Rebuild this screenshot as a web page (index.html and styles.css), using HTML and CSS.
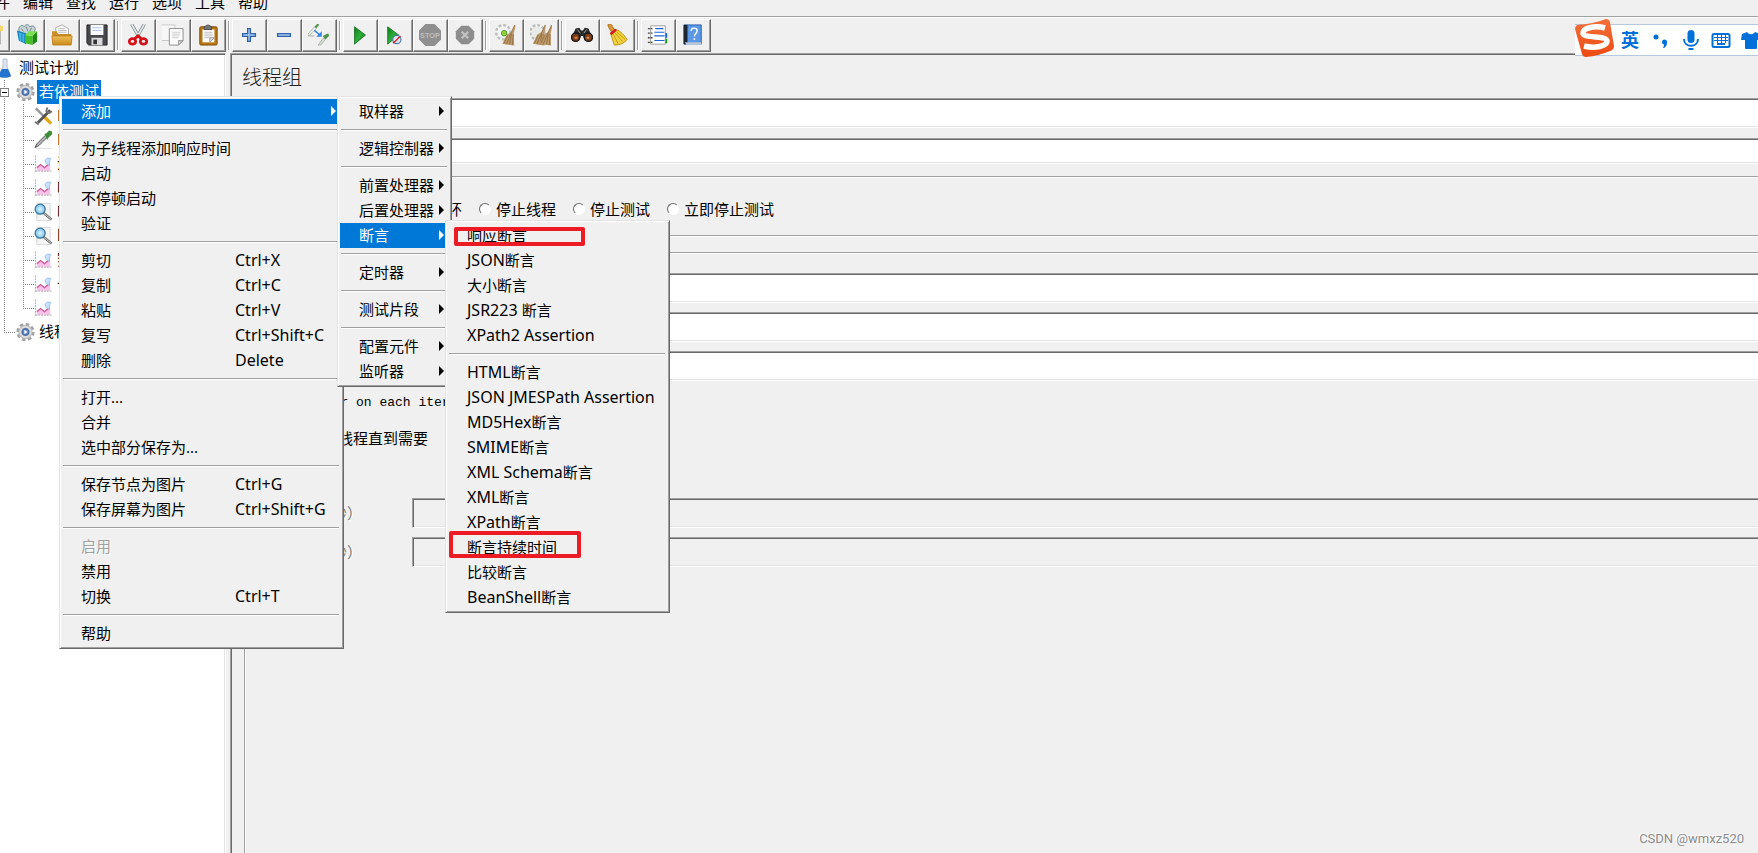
FILE: index.html
```html
<!DOCTYPE html>
<html lang="zh-CN">
<head>
<meta charset="utf-8">
<title>JMeter</title>
<link rel="stylesheet" href="styles.css">
</head>
<body>
<svg class="defs" aria-hidden="true">
  <defs>
    <linearGradient id="green" x1="0" y1="0" x2="1" y2="1"><stop offset="0" stop-color="#0a7a1c"/><stop offset=".5" stop-color="#2fae3a"/><stop offset="1" stop-color="#0b6b12"/></linearGradient>
    <linearGradient id="amber" x1="0" y1="0" x2="0" y2="1"><stop offset="0" stop-color="#f0bc58"/><stop offset="1" stop-color="#c98a18"/></linearGradient>
    <linearGradient id="orange" x1="0" y1="0" x2="0" y2="1"><stop offset="0" stop-color="#f4713a"/><stop offset="1" stop-color="#ee4a10"/></linearGradient>
    <radialGradient id="lens"><stop offset="0" stop-color="#d9f3fd"/><stop offset="1" stop-color="#7cc4ea"/></radialGradient>
    <radialGradient id="hub"><stop offset="0" stop-color="#b9d0f0"/><stop offset=".5" stop-color="#5f86bf"/><stop offset="1" stop-color="#2c4f8c"/></radialGradient>
    <symbol id="gear" viewBox="0 0 20 20">
      <circle cx="10" cy="10" r="8.200" fill="none" stroke="#a2a2a2" stroke-width="2.800" stroke-dasharray="3.700 2.740"/>
      <circle cx="10" cy="10" r="7" fill="#dadada" stroke="#a6a6a6" stroke-width=".8"/>
      <circle cx="10" cy="10" r="4.600" fill="url(#hub)" stroke="#f4f4f4" stroke-width=".6"/>
      <path d="M8.800 8l3.200 2-3.200 2z" fill="#fff"/>
    </symbol>
    <symbol id="chart" viewBox="0 0 20 20">
      <path d="M3 14l4-3 4 3 6-7v10H3z" fill="#f7bfea"/>
      <path d="M1.500 1v17M1.500 17.500H19" stroke="#a8a8a8" stroke-dasharray="2 1" fill="none"/>
      <path d="M3 14l4-3.500 4 3.500 3.500-3 1-3" fill="none" stroke="#d0508f" stroke-width="1.300"/>
      <path d="M17.500 4c-5-1-7 2-5 5 1 2 3 1 4 3-1-3 0-5 1-8z" fill="#c6e2ff" stroke="#8ab8ee" stroke-width=".8"/>
    </symbol>
    <symbol id="magnifier" viewBox="0 0 20 20">
      <path d="M3 1h14v18H3z" fill="#f5f5f5" stroke="#d8d8d8"/>
      <path d="M10 11l8.500 7" stroke="#666" stroke-width="2.400"/><path d="M10 11l8.500 7" stroke="#ccc" stroke-width="1"/>
      <circle cx="6.500" cy="7" r="5.300" fill="url(#lens)" stroke="#3c739c" stroke-width="1.300"/>
    </symbol>
    <symbol id="brush" viewBox="0 0 24 24">
      <path d="M21.500 1l1 .5-2 9 .5 13-7-1-6-1 5-10 5-3z" fill="#bd9868"/>
      <path d="M21.500 1l-4 9-5 12M18 11l-2 11M20 11l-1 12M14 12l-4 9" stroke="#8a673c" stroke-width=".8" fill="none"/>
    </symbol>
  </defs>
</svg>

<nav class="menubar" aria-label="主菜单">
  <button>文件</button><button>编辑</button><button>查找</button><button>运行</button><button>选项</button><button>工具</button><button>帮助</button>
</nav>

<div class="toolbar" role="toolbar" aria-label="工具栏">
  <div class="group">
    <button aria-label="新建"><svg viewBox="0 0 24 24"><path d="M3 2h18v20H3z" fill="#fff" stroke="#999"/><circle cx="22" cy="5" r="3" fill="#f5d76a"/></svg></button>
    <button aria-label="模板"><svg viewBox="0 0 24 24"><path d="M3 6c0-5 5-5 6-3 1-3 5-3 6 0 4-2 6 0 6 3l-2 5H4z" fill="#c5d3d5" stroke="#6d868d"/><path d="M6 5l2 3M11 3l2 5M17 4l-2 4" stroke="#6d868d"/><path d="M1 7l10 3v12l-8-4z" fill="#1583b8"/><path d="M3 9l3 1v9l-2-1zM7 10l2 1v9l-2-1z" fill="#45b5e2"/><path d="M10 12l8 1v10l-8-2z" fill="#42c024"/><path d="M18 13l5-5v11l-5 4z" fill="#1b8a14"/><path d="M10 12l4-4h9l-5 5z" fill="#7be04f"/></svg></button>
    <button aria-label="打开"><svg viewBox="0 0 24 24"><path d="M5 4l7-3 7 4v9H6z" fill="#fafafa" stroke="#aaa"/><path d="M8 5h7M8 7h9M8 9h9" stroke="#bbb"/><path d="M1 8h5l2 3h14v11H2z" fill="#c98d2a"/><path d="M1 13h22l-1 10H2z" fill="url(#amber)" stroke="#b77a12" stroke-width=".8"/></svg></button>
    <button aria-label="保存"><svg viewBox="0 0 24 24"><path d="M1 1h22v22H3l-2-2z" fill="#45474b" stroke="#222"/><path d="M5 1h14v11H5z" fill="#fafcff"/><path d="M7 4h10M7 7h10" stroke="#a7c3e2"/><path d="M6 15h12v8H6z" fill="#d9d9d9"/><path d="M8 17h4v5H8z" fill="#333"/></svg></button>
  </div>
  <div class="group">
    <button aria-label="剪切"><svg viewBox="0 0 24 24"><path d="M5 0l8 14M19 0l-8 14" stroke="#7b8588" stroke-width="3.400"/><path d="M5 0l8 14M19 0l-8 14" stroke="#e5eaea" stroke-width="1.800"/><g fill="none" stroke="#d3121b" stroke-width="3"><ellipse cx="6" cy="19" rx="3.500" ry="3"/><ellipse cx="18" cy="19" rx="3.500" ry="3"/><path d="M8.500 16l3.500-3 3.500 3"/></g></svg></button>
    <button aria-label="复制"><svg viewBox="0 0 24 24"><path d="M-1 1h15v17H-1z" fill="#f7f7f7" stroke="#c4c4c4"/><path d="M8 5h15v13l-5 5H8z" fill="#fcfcfc" stroke="#888"/><path d="M18 23v-5h5z" fill="#ccc" stroke="#999"/><path d="M11 9h9M11 11h9M11 13h8M11 15h7" stroke="#ccc"/></svg></button>
    <button aria-label="粘贴"><svg viewBox="0 0 24 24"><rect x="3" y="3" width="19" height="20" rx="1.500" fill="#b87512" stroke="#7d4d08"/><path d="M6 6h13v14H6z" fill="#fff"/><path d="M8 9h9M8 11h9M8 13h9M8 15h6" stroke="#bbb"/><path d="M14 20v-5h5z" fill="#ddd" stroke="#999"/><path d="M8 6V3l4-2 4 2v3z" fill="#777" stroke="#444"/></svg></button>
  </div>
  <div class="group">
    <button aria-label="展开"><svg viewBox="0 0 24 24"><path d="M10.500 5h3v5.500H19v3h-5.500V19h-3v-5.500H5v-3h5.500z" fill="#a9c9ef" stroke="#2e62ab" stroke-width="1.400"/></svg></button>
    <button aria-label="折叠"><svg viewBox="0 0 24 24"><path d="M5 10.500h14v3H5z" fill="#a9c9ef" stroke="#2e62ab" stroke-width="1.400"/></svg></button>
    <button aria-label="切换"><svg viewBox="0 0 24 24"><path d="M0 11l7-8 2 2-7 7-2 1z" fill="#e8efe6" stroke="#9bab98" stroke-width=".7"/><path d="M7 3l4-4 1 2-3 4z" fill="#4c944a"/><path d="M0 13h7" stroke="#aaa"/><path d="M7 7l6 5" stroke="#3284e8" stroke-width="1.700"/><path d="M15 8v6H9z" fill="#3284e8"/><path d="M11 23l6-8 2 2-5 6z" fill="#d7ddd5" stroke="#92a08f" stroke-width=".7"/><path d="M16 13l6-3 1 3-4 4z" fill="#4c944a"/></svg></button>
  </div>
  <div class="group">
    <button aria-label="启动"><svg viewBox="0 0 24 24"><path d="M6 3l12 9-12 10z" fill="url(#green)" stroke="#0b6a17" stroke-width=".8"/></svg></button>
    <button aria-label="不停顿启动"><svg viewBox="0 0 24 24"><path d="M4 3l12 9-12 10z" fill="url(#green)" stroke="#0b6a17" stroke-width=".8"/><circle cx="14" cy="17" r="4.500" fill="#dfe9f2" stroke="#4b7dae" stroke-width="1.300"/><path d="M10 21l8-8" stroke="#d9262c" stroke-width="1.600"/></svg></button>
    <button aria-label="停止" disabled><svg viewBox="0 0 24 24"><path d="M7 0h10l7 7v10l-7 7H7l-7-7V7z" fill="#8f8f8f"/><text x="12" y="15" class="stop-text">STOP</text></svg></button>
    <button aria-label="关闭" disabled><svg viewBox="0 0 24 24"><path d="M8 2h8l6 6v8l-6 6H8l-6-6V8z" fill="#8d8d8d"/><path d="M8.500 8.500l7 7M15.500 8.500l-7 7" stroke="#c2c2c2" stroke-width="2.500"/></svg></button>
  </div>
  <div class="group">
    <button aria-label="清除"><svg viewBox="0 0 24 24"><circle cx="9" cy="9" r="7.500" fill="#f9f9f9" stroke="#b9bdb9" stroke-width="3" stroke-dasharray="3 2"/><circle cx="9" cy="9" r="6.500" fill="#f2f4f2"/><circle cx="10" cy="10" r="3" fill="#8fcf2f" stroke="#4e9a35"/><use href="#brush"/></svg></button>
    <button aria-label="清除全部"><svg viewBox="0 0 24 24"><circle cx="8" cy="9" r="7.500" fill="#f9f9f9" stroke="#b9bdb9" stroke-width="3" stroke-dasharray="3 2"/><circle cx="8" cy="9" r="6.500" fill="#e8ebe8"/><use href="#brush" x="-5"/><use href="#brush" x="2"/></svg></button>
  </div>
  <div class="group">
    <button aria-label="查找"><svg viewBox="0 0 24 24"><path d="M5 5l4-1 2 3h2l2-3 4 1 4 9-3 4h-5l-2-5h-2l-2 5H4l-3-4z" fill="#292929"/><path d="M7 6l3 4M17 6l-3 4" stroke="#aaa"/><circle cx="5" cy="14.500" r="4.500" fill="#7a3d18" stroke="#171717" stroke-width="1.500"/><circle cx="19" cy="14.500" r="4.500" fill="#7a3d18" stroke="#171717" stroke-width="1.500"/><path d="M4 15h3M17 15h3" stroke="#dd8646" stroke-width="2"/></svg></button>
    <button aria-label="重置查找"><svg viewBox="0 0 24 24"><path d="M2 1c2-3 5 0 5 2l3 4-3 3-4-6z" fill="#d79834" stroke="#a76c15"/><path d="M5 10l6-4c5 2 8 5 12 11-3 4-8 6-14 6z" fill="#f1d23c" stroke="#b88e13"/><path d="M8 11l5 10M10 10l8 9M12 9l9 8" stroke="#c39a18"/><path d="M5 11l6-5" stroke="#d4201d" stroke-width="3"/></svg></button>
  </div>
  <div class="group">
    <button aria-label="函数助手"><svg viewBox="0 0 24 24"><path d="M4 2h16v20H4z" fill="#fff" stroke="#999"/><path d="M9 5h9M8 9h11M8 13h11M8 18h11" stroke="#1a66e0" stroke-width="1.200"/><path d="M1 5h5M1 10h5M1 15h5M1 20h5" stroke="#444" stroke-width="1.500" stroke-dasharray="2 1"/><path d="M20 10h2v5h-2z" fill="#1462df"/><path d="M20 16h2v5h-2z" fill="#159a18"/></svg></button>
    <button aria-label="帮助文档"><svg viewBox="0 0 24 24"><path d="M2 1h19v21H2z" fill="#5b98e6" stroke="#2b5ea8"/><path d="M2 1h4v21H2z" fill="#1c2535"/><path d="M3 20l2 3h16v-3z" fill="#b8c6da"/><path d="M10 7.500c0-4 6.500-4 6.500 0 0 3-3 2.500-3 6M13.500 15.500v2" stroke="#fff" stroke-width="1.600" fill="none"/></svg></button>
  </div>
</div>

<div class="workspace">
  <aside class="tree-pane">
    <ul class="tree">
      <li class="row root"><svg class="flask" viewBox="0 0 12 20"><path d="M3 1h4v8l4 9c-2 2-10 2-13 0l5-9z" fill="#dce7f1" stroke="#a4b1bd" stroke-width=".8"/><path d="M2 11h6l3 7c-3 2-10 2-13 0z" fill="#2173cd"/></svg><span class="label">测试计划</span></li>
      <li class="row"><span class="toggle-rail"><button class="toggle" aria-label="折叠节点"></button></span><svg class="node"><use href="#gear"/></svg><span class="label selected">若依测试</span></li>
      <li class="row"><span class="rail"></span><span class="branch"></span><svg class="node" viewBox="0 0 20 20"><path d="M2 2l15 15" stroke="#999" stroke-width="2.500"/><path d="M11 11l7 7" stroke="#e2a716" stroke-width="3.500"/><path d="M17 4L4 17" stroke="#555" stroke-width="3"/><path d="M14 1l-1 4 3 2 3-2M1 16l4 3" stroke="#777" stroke-width="2" fill="none"/></svg><span class="label">HTTP请求默认值</span></li>
      <li class="row"><span class="rail"></span><span class="branch"></span><svg class="node" viewBox="0 0 20 20"><path d="M1 18l2-4 9-9 2 2-9 9z" fill="#b6b6b6" stroke="#555"/><path d="M11 4l2-1 3-3 3 1v3l-4 4-1 2z" fill="#3d8f34"/><path d="M2 19h17" stroke="#ddd"/></svg><span class="label">HTTP信息头管理器</span></li>
      <li class="row"><span class="rail"></span><span class="branch"></span><svg class="node"><use href="#chart"/></svg><span class="label">汇总报告</span></li>
      <li class="row"><span class="rail"></span><span class="branch"></span><svg class="node"><use href="#chart"/></svg><span class="label">响应时间图</span></li>
      <li class="row"><span class="rail"></span><span class="branch"></span><svg class="node"><use href="#magnifier"/></svg><span class="label">响应断言</span></li>
      <li class="row"><span class="rail"></span><span class="branch"></span><svg class="node"><use href="#magnifier"/></svg><span class="label">断言持续时间</span></li>
      <li class="row"><span class="rail"></span><span class="branch"></span><svg class="node"><use href="#chart"/></svg><span class="label">察看结果树</span></li>
      <li class="row"><span class="rail"></span><span class="branch"></span><svg class="node"><use href="#chart"/></svg><span class="label">一般图形结果</span></li>
      <li class="row"><span class="rail"></span><span class="branch last"></span><svg class="node"><use href="#chart"/></svg><span class="label"></span></li>
      <li class="row"><span class="branch outer last"></span><svg class="node"><use href="#gear"/></svg><span class="label">线程组</span></li>
    </ul>
  </aside>

  <main class="editor">
    <h1>线程组</h1>
    <div class="fields">
      <label class="field"><span>名称：</span><input type="text"></label>
      <label class="field short"><span>注释：</span><input type="text"></label>
    </div>
    <fieldset class="on-error" aria-label="在取样器错误后要执行的动作">
      <label><input type="radio" name="action">继续</label>
      <label><input type="radio" name="action">启动下一进程循环</label>
      <label><input type="radio" name="action">停止线程</label>
      <label><input type="radio" name="action">停止测试</label>
      <label><input type="radio" name="action">立即停止测试</label>
    </fieldset>
    <fieldset class="properties" aria-label="线程属性">
      <label class="field"><span>线程数：</span><input type="text"></label>
      <label class="field"><span>Ramp-Up时间（秒）：</span><input type="text"></label>
      <label class="field"><span>循环次数</span><input type="text"></label>
      <label class="check"><input type="checkbox"><span class="mono">Same user on each iteration</span></label>
      <label class="check"><input type="checkbox"><span>延迟创建线程直到需要</span></label>
      <label class="check scheduler"><input type="checkbox"><span>调度器</span></label>
      <label class="field off"><span>持续时间（秒）</span><input type="text" disabled></label>
      <label class="field off"><span>启动延迟（秒）</span><input type="text" disabled></label>
    </fieldset>
  </main>
</div>

<div class="menu context" role="menu">
  <button class="open">添加<i class="arrow"></i></button>
  <hr>
  <button>为子线程添加响应时间</button>
  <button>启动</button>
  <button>不停顿启动</button>
  <button>验证</button>
  <hr>
  <button>剪切<kbd>Ctrl+X</kbd></button>
  <button>复制<kbd>Ctrl+C</kbd></button>
  <button>粘贴<kbd>Ctrl+V</kbd></button>
  <button>复写<kbd>Ctrl+Shift+C</kbd></button>
  <button>删除<kbd>Delete</kbd></button>
  <hr>
  <button>打开...</button>
  <button>合并</button>
  <button>选中部分保存为...</button>
  <hr>
  <button>保存节点为图片<kbd>Ctrl+G</kbd></button>
  <button>保存屏幕为图片<kbd>Ctrl+Shift+G</kbd></button>
  <hr>
  <button disabled>启用</button>
  <button>禁用</button>
  <button>切换<kbd>Ctrl+T</kbd></button>
  <hr>
  <button>帮助</button>
</div>

<div class="menu add" role="menu">
  <button>取样器<i class="arrow"></i></button>
  <hr>
  <button>逻辑控制器<i class="arrow"></i></button>
  <hr>
  <button>前置处理器<i class="arrow"></i></button>
  <button>后置处理器<i class="arrow"></i></button>
  <button class="open">断言<i class="arrow"></i></button>
  <hr>
  <button>定时器<i class="arrow"></i></button>
  <hr>
  <button>测试片段<i class="arrow"></i></button>
  <hr>
  <button>配置元件<i class="arrow"></i></button>
  <button>监听器<i class="arrow"></i></button>
</div>

<div class="menu assertions" role="menu">
  <button>响应断言</button>
  <button><span class="latin">JSON</span>断言</button>
  <button>大小断言</button>
  <button><span class="latin">JSR223&nbsp;</span>断言</button>
  <button><span class="latin">XPath2 Assertion</span></button>
  <hr>
  <button><span class="latin">HTML</span>断言</button>
  <button><span class="latin">JSON JMESPath Assertion</span></button>
  <button><span class="latin">MD5Hex</span>断言</button>
  <button><span class="latin">SMIME</span>断言</button>
  <button><span class="latin">XML Schema</span>断言</button>
  <button><span class="latin">XML</span>断言</button>
  <button><span class="latin">XPath</span>断言</button>
  <button>断言持续时间</button>
  <button>比较断言</button>
  <button><span class="latin">BeanShell</span>断言</button>
  <span class="mark mark-response"></span>
  <span class="mark mark-duration"></span>
</div>

<div class="ime">
  <svg class="ime-logo" viewBox="0 0 40 38"><path d="M2 6Q18 5 31 0q3 0 4 3l4 24q0 4-4 5-12 5-24 6-3 0-4-3L0 10q0-3 2-4z" fill="url(#orange)"/><path d="M30 9C20 6 8 9 8 14c0 6 24 2 24 8 0 5-12 8-23 5" fill="none" stroke="#fff" stroke-width="5.500"/></svg>
  <button class="ime-lang">英</button>
  <button aria-label="标点"><svg viewBox="0 0 20 20"><circle cx="5" cy="7" r="2.500"/><path d="M11 12a2.500 2.500 0 1 1 5 0c0 4-2 6-4 6 1-2 1-3 1-3.500-1 0-2-1-2-2.500z"/></svg></button>
  <button aria-label="语音"><svg viewBox="0 0 20 20"><rect x="6.500" y="0" width="7" height="13" rx="3.500"/><path d="M3 9c0 9 14 9 14 0" fill="none" stroke="#0070d9" stroke-width="2"/><path d="M7.500 18h5v2h-5z"/></svg></button>
  <button aria-label="键盘"><svg viewBox="0 0 20 20"><rect x="1.500" y="4" width="17" height="13" rx="1.500" fill="none" stroke="#0070d9" stroke-width="2"/><path d="M3 7h14v1H3zM3 10h14v1H3zM6 5h1v8H6zM10 5h1v8h-1zM14 5h1v8h-1zM6 13h8v2H6z"/></svg></button>
  <button aria-label="皮肤"><svg viewBox="0 0 20 20"><path d="M6 2c2 3 6 3 8 0l5 2 1 6h-4v8q0 1-1 1H5q-1 0-1-1v-8H0l1-6z"/></svg></button>
</div>

<div class="watermark">CSDN @wmxz520</div>
</body>
</html>
```
FILE: styles.css
```css
:root {
  --face: #f0f0f0;
  --light: #e3e3e3;
  --shade: #a0a0a0;
  --dark: #696969;
  --accent: #0078d7;
}

* { box-sizing: border-box; }

body {
  margin: 0;
  height: 100vh;
  display: flex;
  flex-direction: column;
  overflow: hidden;
  background: var(--face);
  color: #000;
  font: 15px/22px "Noto Sans", "Noto Sans CJK SC", sans-serif;
}

button {
  border: 0;
  padding: 0;
  background: none;
  color: inherit;
  font: inherit;
}

.defs { position: absolute; width: 0; height: 0; }

/* menu bar */
.menubar {
  display: flex;
  flex: none;
  gap: 13px;
  margin: -9px 0 0 -20px;
  padding-bottom: 3px;
  border-bottom: 1px solid var(--shade);
}

/* toolbar */
.toolbar {
  display: flex;
  flex: none;
  margin-left: -25px;
  padding: 1px 0;
  border-top: 1px solid #fff;
}
.group { display: flex; }
.group + .group::before {
  content: "";
  width: 2px;
  margin: 2px;
  background: linear-gradient(90deg, var(--shade) 50%, #fff 50%);
}
.group button {
  width: 35px;
  height: 33px;
  display: grid;
  place-items: center;
  padding: 0 2px 2px 0;
  border: 1px solid;
  border-color: #fff var(--dark) var(--dark) #fff;
  box-shadow: inset -1px -1px var(--shade);
}
.group svg { width: 22px; height: 22px; }
.stop-text {
  font: bold 8px "Liberation Sans", sans-serif;
  text-anchor: middle;
  fill: #bdbdbd;
}

/* workspace */
.workspace { flex: 1; min-height: 0; display: flex; gap: 4px; }

.tree-pane {
  width: 226px;
  flex: none;
  background: #fff;
  border-top: 1px solid var(--shade);
  border-right: 1px solid #fff;
  box-shadow: inset 0 1px var(--dark), inset -1px 0 var(--light);
}
.tree { list-style: none; margin: 0; padding: 2px 0 0; }
.row { display: flex; align-items: center; height: 24px; overflow: hidden; }
.flask { width: 12px; height: 20px; margin-right: 5px; }
.node { width: 19px; height: 20px; flex: none; margin-right: 2px; }
.label {
  padding: 0 2px 2px;
  white-space: nowrap;
  font-family: "Noto Sans CJK SC", sans-serif;
}
.selected { background: var(--accent); color: #fff; }

.rail, .toggle-rail, .branch {
  flex: none;
  align-self: stretch;
  background-repeat: no-repeat;
  background-image: repeating-linear-gradient(180deg, #808080 0 1px, transparent 1px 2px);
}
.rail { width: 23px; background-size: 1px 100%; background-position: 4px 0; }
.branch {
  width: 11px;
  background-image:
    repeating-linear-gradient(180deg, #808080 0 1px, transparent 1px 2px),
    repeating-linear-gradient(90deg, #808080 0 1px, transparent 1px 2px);
  background-size: 1px 100%, 100% 1px;
  background-position: 0 0, 0 12px;
}
.branch.last { background-size: 1px 12px, 100% 1px; }
.branch.outer { width: 12px; margin-left: 4px; }
.toggle-rail {
  width: 16px;
  display: flex;
  align-items: center;
  background-size: 1px 100%;
  background-position: 4px 0;
}
.toggle {
  width: 9px;
  height: 9px;
  border: 1px solid #808080;
  background: linear-gradient(#000, #000) center / 5px 1px no-repeat #fff;
}

/* editor */
.editor {
  flex: 1;
  min-width: 0;
  display: flex;
  flex-direction: column;
  padding: 11px 0 0 11px;
  border-top: 1px solid var(--shade);
  border-left: 1px solid var(--shade);
  box-shadow: inset 1px 1px var(--dark);
  font-family: "Noto Sans CJK SC", sans-serif;
}
h1 { margin: 0 0 9px; font-size: 20px; line-height: 24px; font-weight: 300; color: #222; }

input[type="text"] {
  flex: 1;
  min-width: 0;
  height: 30px;
  padding: 0 4px;
  border: 1px solid;
  border-color: var(--shade) transparent #fff var(--shade);
  border-right: 0;
  border-radius: 0;
  background: #fff;
  box-shadow: inset 1px 1px var(--dark), inset 0 -1px var(--light);
  font: inherit;
}
input[type="text"]:disabled { background: var(--face); }

.fields { display: grid; gap: 10px; margin-left: 2px; }
.field { display: flex; align-items: center; }
.field > span { width: 155px; flex: none; white-space: nowrap; }
.fields .field > span { width: 60px; }
.short input[type="text"] { height: 26px; }

fieldset {
  min-width: 0;
  margin: 0 0 0 2px;
  border: 1px solid var(--shade);
  border-right: 0;
  box-shadow: inset 1px 1px #fff, 0 1px #fff;
}
.on-error {
  display: flex;
  gap: 17px;
  height: 60px;
  margin-top: 12px;
  padding: 21px 16px 0;
}
.on-error label { display: flex; align-items: center; gap: 5px; height: 22px; white-space: nowrap; }
input[type="radio"] {
  appearance: none;
  width: 12px;
  height: 12px;
  margin: 0;
  border: 1px solid;
  border-color: var(--dark) #fff #fff var(--dark);
  border-radius: 50%;
  background: #fff;
}
.properties {
  flex: 1;
  display: flex;
  flex-direction: column;
  gap: 9px;
  margin-top: 16px;
  padding: 20px 0 0 12px;
  border-bottom: 0;
}
.check { display: flex; align-items: center; gap: 5px; height: 26px; padding-left: 3px; }
.scheduler { height: 29px; }
.check input { width: 13px; height: 13px; margin: 0; }
.mono { font: 13px/22px "Liberation Mono", monospace; }
.off { color: #777; text-shadow: 1px 1px #fff; }

/* popup menus */
.menu {
  position: absolute;
  display: flex;
  flex-direction: column;
  padding: 2px 3px 2px 2px;
  background: var(--face);
  border: 1px solid;
  border-color: var(--light) var(--dark) var(--dark) var(--light);
  box-shadow: inset 1px 1px #fff, inset -1px -1px var(--shade);
}
.menu button {
  display: flex;
  align-items: center;
  height: 25px;
  padding: 0 0 2px 19px;
  text-align: left;
  white-space: nowrap;
}
.menu hr {
  height: 2px;
  margin: 5px 1px;
  border: 0;
  border-top: 1px solid var(--shade);
  background: #fff;
}
.menu .open { background: var(--accent); color: #fff; }
.menu button:disabled { color: var(--shade); text-shadow: 1px 1px #fff; }
.menu kbd { position: absolute; left: 175px; font: inherit; font-size: 16px; }
.latin { font-size: 16px; }
.arrow {
  margin: 0 4px 0 auto;
  border-left: 5px solid currentColor;
  border-top: 5px solid transparent;
  border-bottom: 5px solid transparent;
}
.context { left: 59px; top: 96px; width: 285px; }
.add { left: 337px; top: 96px; width: 115px; }
.assertions { left: 445px; top: 220px; width: 225px; }

.mark { position: absolute; border: 4px solid #ed1c24; border-radius: 2px; }
.mark-response { left: 8px; top: 6px; width: 131px; height: 19px; }
.mark-duration { left: 3px; top: 310px; width: 132px; height: 27px; }

/* input method bar */
.ime {
  position: absolute;
  top: 24px;
  right: 0;
  display: flex;
  align-items: center;
  gap: 10px;
  width: 183px;
  height: 32px;
  background: #fff;
  border: 1px solid #b4c9e0;
  border-width: 1px 0;
  color: #0070d9;
}
.ime svg { width: 20px; height: 20px; display: block; fill: #0070d9; flex: none; }
.ime .ime-logo { width: 40px; height: 38px; margin-top: -5px; }
.ime button { flex: none; }
.ime .ime-lang { width: 18px; margin: 0 2px 0 -4px; font-size: 18px; font-weight: 700; }

.watermark {
  position: absolute;
  right: 14px;
  bottom: 3px;
  font: 13px/22px Roboto, sans-serif;
  color: #8c8c8c;
  text-shadow: -1px -1px #fff;
}
```
